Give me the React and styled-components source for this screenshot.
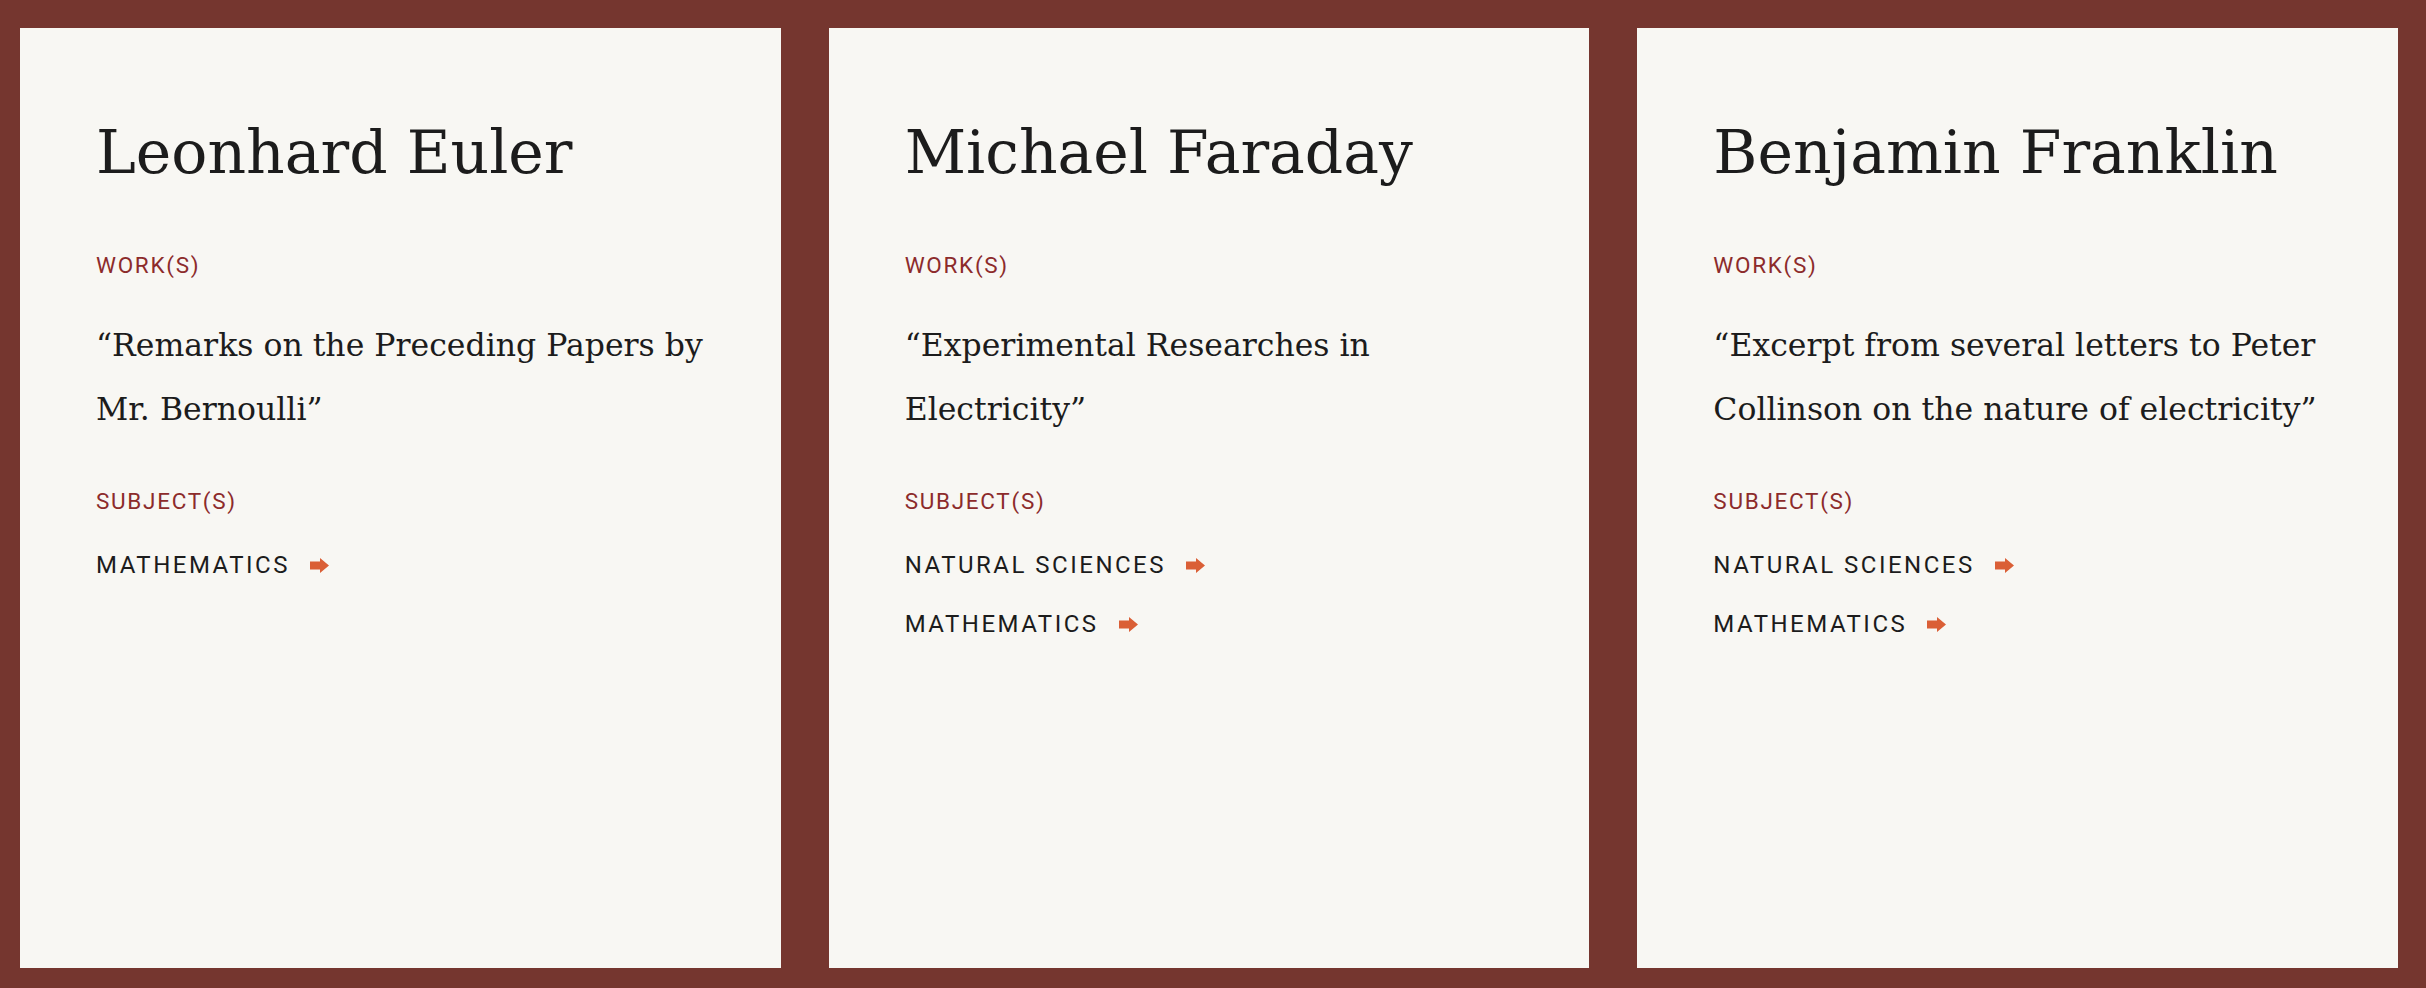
import styled, { createGlobalStyle } from "styled-components"

const GlobalStyle = createGlobalStyle`
    html, body {
        margin: 0;
        padding: 0;
        background-color: #75362f;
    }
    * {
        box-sizing: border-box;
    }
`

const Pagina = styled.main`
    display: grid;
    grid-template-columns: repeat(3, 1fr);
    gap: 48px;
    min-height: 100vh;
    padding: 28px 28px 20px 20px;
    background-color: #75362f;
`

const Cartao = styled.article`
    background-color: #f8f7f3;
    padding: 88px 70px 40px 76px;
    color: #1c1c1c;
`

const Nome = styled.h2`
    margin: 0;
    font-family: "DejaVu Serif", "Liberation Serif", serif;
    font-weight: 400;
    font-size: 60px;
    line-height: 72px;
`

const Rotulo = styled.h3`
    margin: ${props => props.$topo}px 0 0 0;
    font-family: Roboto, "Liberation Sans", sans-serif;
    font-weight: 400;
    font-size: 22.5px;
    line-height: 28px;
    letter-spacing: 1.7px;
    text-transform: uppercase;
    color: #8c2b2b;
`

const Obra = styled.p`
    margin: 34px 0 0 0;
    font-family: "DejaVu Serif", "Liberation Serif", serif;
    font-size: 31.5px;
    line-height: 64px;
`

const ListaAssuntos = styled.ul`
    list-style: none;
    margin: 36px 0 0 0;
    padding: 0;
    display: flex;
    flex-direction: column;
    gap: 30px;
`

const LinkAssunto = styled.a`
    display: inline-flex;
    align-items: center;
    gap: 20px;
    font-family: Roboto, "Liberation Sans", sans-serif;
    font-size: 24px;
    line-height: 29px;
    letter-spacing: 2.5px;
    text-transform: uppercase;
    color: #1c1c1c;
    text-decoration: none;
`

const Seta = () => (
    <svg width="19" height="15" viewBox="0 0 19 15" aria-hidden="true">
        <path d="M0 3.5 H10 V0 L19 7.5 L10 15 V11.5 H0 Z" fill="#da5f36" />
    </svg>
)

const cientistas = [
    {
        nome: "Leonhard Euler",
        obra: "\u201cRemarks on the Preceding Papers by Mr. Bernoulli\u201d",
        assuntos: ["Mathematics"],
    },
    {
        nome: "Michael Faraday",
        obra: "\u201cExperimental Researches in Electricity\u201d",
        assuntos: ["Natural Sciences", "Mathematics"],
    },
    {
        nome: "Benjamin Franklin",
        obra: "\u201cExcerpt from several letters to Peter Collinson on the nature of electricity\u201d",
        assuntos: ["Natural Sciences", "Mathematics"],
    },
]

const App = () => {
    return (
        <>
            <GlobalStyle />
            <Pagina>
                {cientistas.map((cientista) => (
                    <Cartao key={cientista.nome}>
                        <Nome>{cientista.nome}</Nome>
                        <Rotulo $topo={63}>Work(s)</Rotulo>
                        <Obra>{cientista.obra}</Obra>
                        <Rotulo $topo={46}>Subject(s)</Rotulo>
                        <ListaAssuntos>
                            {cientista.assuntos.map((assunto) => (
                                <li key={assunto}>
                                    <LinkAssunto href="#">
                                        {assunto}
                                        <Seta />
                                    </LinkAssunto>
                                </li>
                            ))}
                        </ListaAssuntos>
                    </Cartao>
                ))}
            </Pagina>
        </>
    )
}

export default App
